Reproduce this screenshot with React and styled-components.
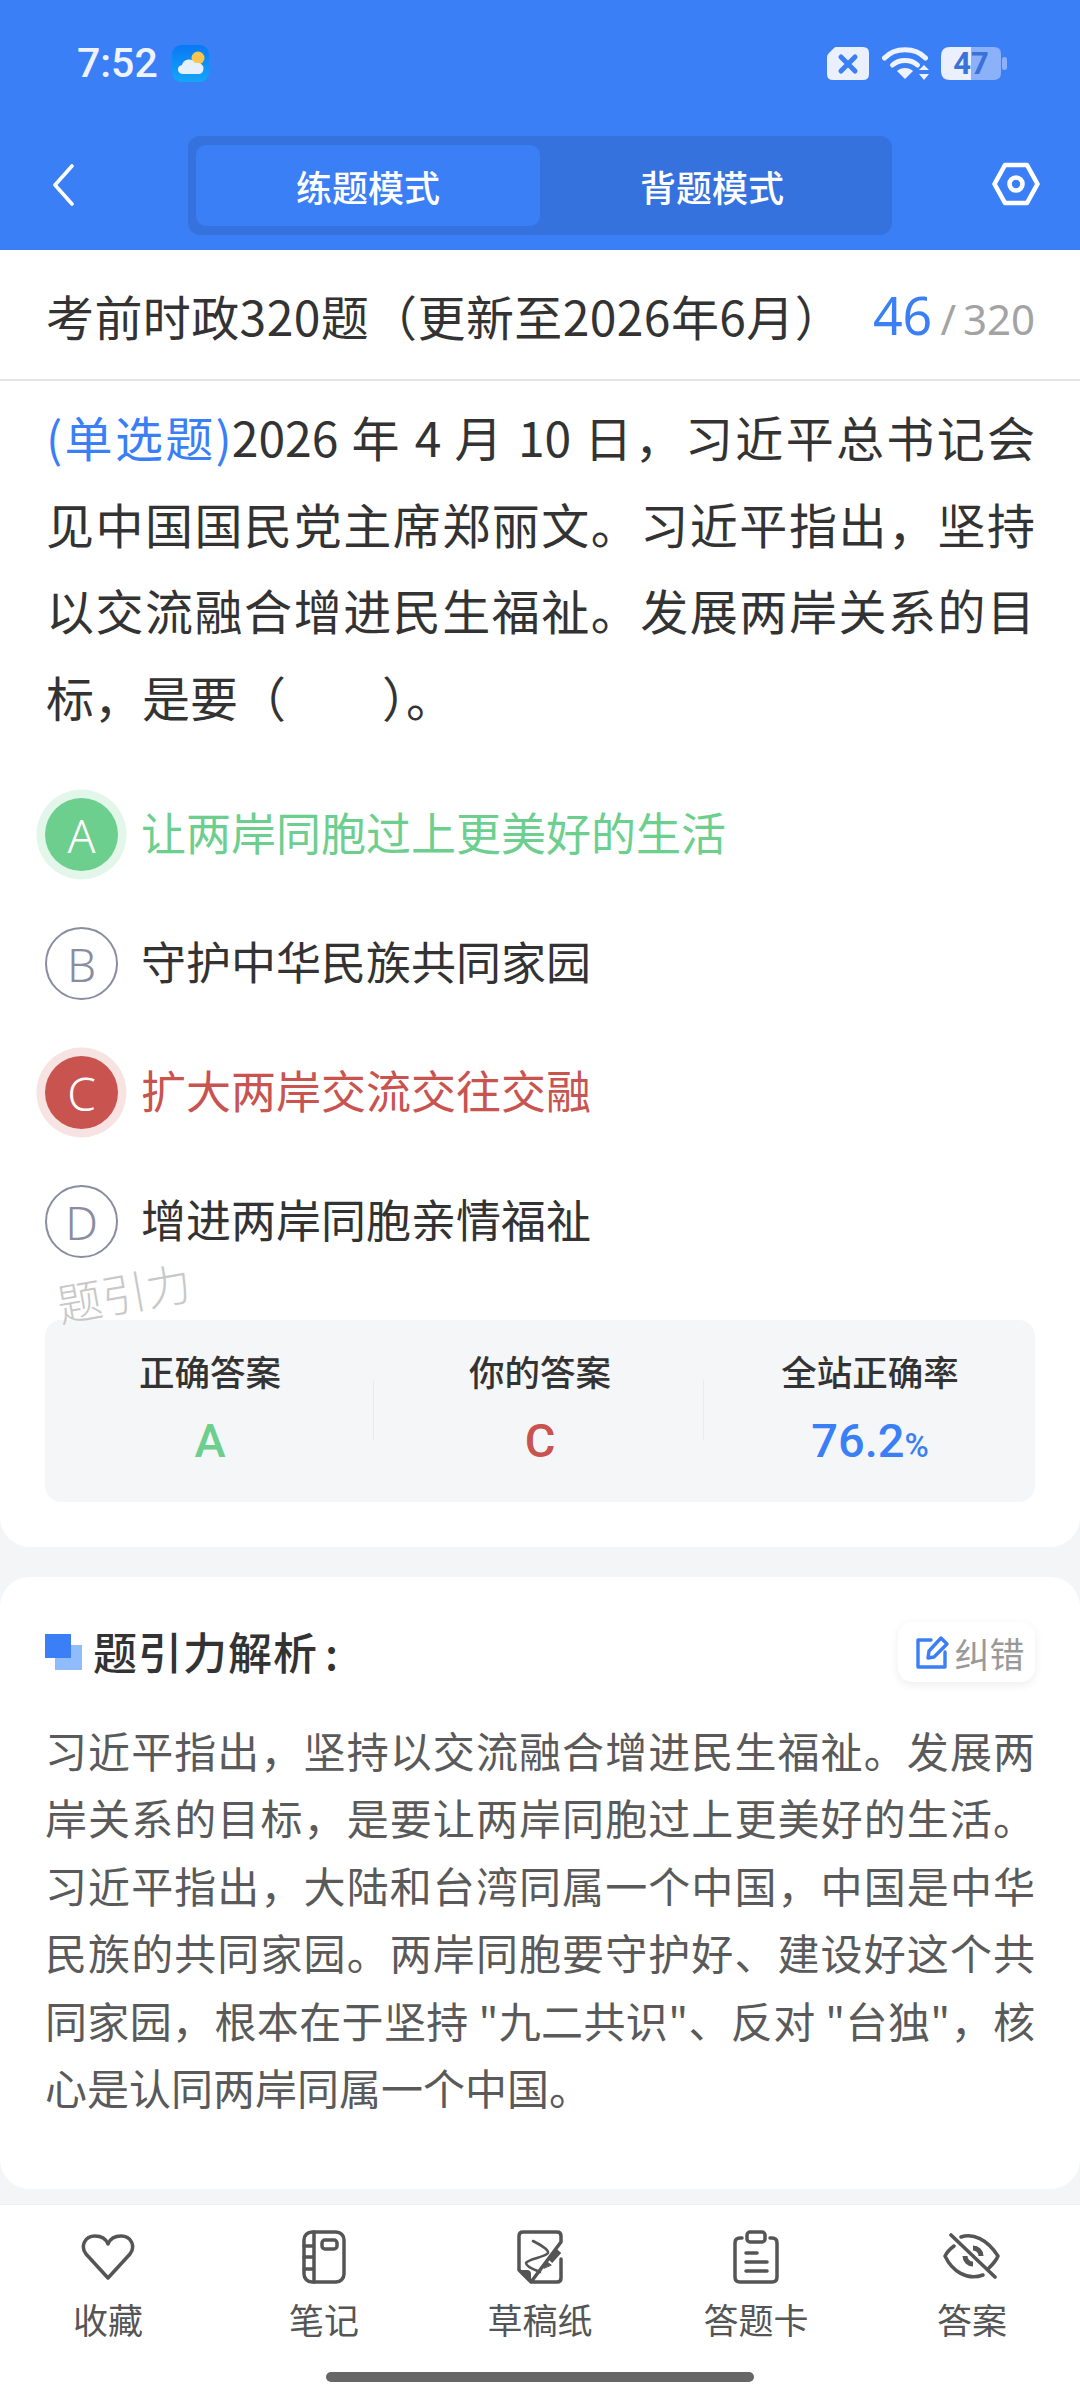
import React from "react";
import styled, { createGlobalStyle } from "styled-components";

const CJK = `"Noto Sans CJK SC", "Noto Sans", sans-serif`;
const LATIN = `Roboto, "Noto Sans CJK SC", sans-serif`;
const BLUE = "#3b7ff7";
const GREEN = "#6dcf8e";
const RED = "#c9534f";

const Global = createGlobalStyle`
  html, body { margin: 0; padding: 0; background: #f4f5f7; }
  * { box-sizing: border-box; }
`;

const Page = styled.div`
  width: 1080px; height: 2400px; display: flex; flex-direction: column;
  background: #f4f5f7; font-family: ${LATIN}; color: #333; overflow: hidden;
`;
const Header = styled.header`background: ${BLUE}; height: 250px; display: flex; flex-direction: column;`;
const StatusBar = styled.div`
  height: 126px; padding: 0 73px 0 77px; display: flex; align-items: center; justify-content: space-between;
`;
const StatusLeft = styled.div`display: flex; align-items: center; gap: 14px;`;
const Time = styled.span`font-size: 41px; font-weight: 500; color: #eef3fe; font-family: Roboto, sans-serif;`;
const StatusRight = styled.div`display: flex; align-items: center; gap: 12px;`;
const Battery = styled.div`
  position: relative; width: 66px; height: 33px; display: flex; align-items: center; justify-content: center;
`;
const BatteryText = styled.span`
  position: relative; font-size: 31px; font-weight: 700; color: #3a72d8; font-family: Roboto, sans-serif; margin-right: 6px;
`;
const BatteryShape = styled.svg`position: absolute; inset: 0;`;
const Nav = styled.nav`
  flex: 1; display: flex; align-items: flex-start; justify-content: space-between; padding: 10px 40px 0 52px;
`;
const NavIcon = styled.svg`display: block; margin-top: ${p => p.$top}px;`;
const Tabs = styled.div`
  width: 704px; height: 99px; padding: 9px 8px; display: flex; background: #3672dd; border-radius: 12px; margin-left: 14px;
`;
const Tab = styled.div`
  flex: 1; display: flex; align-items: center; justify-content: center; font-family: ${CJK}; font-size: 36px; font-weight: 500;
  color: #fff; border-radius: 10px; background: ${p => (p.$active ? BLUE : "transparent")};
`;
const Scroll = styled.main`flex: 1; min-height: 0; overflow: hidden;`;
const QuestionCard = styled.section`background: #fff; height: 1297px; border-radius: 0 0 30px 30px;`;
const TitleRow = styled.div`
  height: 131px; border-bottom: 2px solid #e3e3e3; padding: 0 45px 0 46px; display: flex; align-items: center; justify-content: space-between;
`;
const Title = styled.h1`margin: 0; font-family: ${CJK}; font-weight: 400; font-size: 48px; color: #333; white-space: nowrap; letter-spacing: 0.4px;`;
const Counter = styled.div`display: flex; align-items: baseline; white-space: nowrap;`;
const Current = styled.span`font-size: 52px; color: ${BLUE}; font-family: "Noto Sans", sans-serif;`;
const Total = styled.span`font-size: 42px; color: #a3a3a3; margin-left: 8px; word-spacing: -4px; font-family: "Noto Sans", sans-serif;`;
const Question = styled.p`
  margin: 12px 45px 0 46px; font-family: ${CJK}; font-size: 48px; line-height: 86.6px; letter-spacing: 0; color: #333; text-align: justify;
`;
const QType = styled.span`color: ${BLUE};`;
const Options = styled.div`margin-top: 31px; padding-left: 45px;`;
const Option = styled.div`
  height: 129px; display: flex; align-items: center; gap: 23px; font-family: ${CJK}; font-size: 45px;
  color: ${p => p.$color || "#333"};
`;
const OptionText = styled.span`margin-bottom: 6px;`;
const Badge = styled.span`
  width: 73px; height: 73px; flex: none; border-radius: 50%; display: flex; align-items: center; justify-content: center;
  font-family: "Noto Sans", sans-serif; font-size: 46px; font-weight: 300;
  color: ${p => (p.$bg ? "#fff" : "#8a8ca0")};
  background: ${p => p.$bg || "#fff"};
  border: ${p => (p.$bg ? "none" : "2px solid #8a8ca0")};
  box-shadow: ${p => (p.$ring ? `0 0 0 8.5px ${p.$ring}` : "none")};
`;
const Watermark = styled.div`
  position: absolute; left: 56px; top: 1259px; transform: rotate(-10deg); font-family: ${CJK}; font-size: 45px;
  font-weight: 300; color: #c8c8c8; pointer-events: none;
`;
const Stats = styled.div`
  margin: 34px 45px 0; height: 182px; background: #f4f6f8; border-radius: 16px; display: grid; grid-template-columns: repeat(3, 1fr); align-items: center;
`;
const Stat = styled.div`
  height: 100%; position: relative; display: flex; flex-direction: column; align-items: center; padding-top: 28px;
  & + &::before { content: ""; position: absolute; left: -2px; top: 60px; height: 60px; width: 1px; background: #e9ebee; }
`;
const StatLabel = styled.div`font-family: ${CJK}; font-size: 35.500px; font-weight: 500; color: #333; line-height: 46px;`;
const StatValue = styled.div`
  font-family: Roboto, sans-serif; font-size: 47px; font-weight: 500; line-height: 60px; margin-top: 17px; color: ${p => p.$color};
  small { font-size: 33px; }
`;
const AnalysisCard = styled.section`background: #fff; margin-top: 30px; height: 612px; border-radius: 30px; padding: 45px 45px 0;`;
const AnalysisHead = styled.div`display: flex; align-items: center; justify-content: space-between; height: 60px;`;
const HeadLeft = styled.div`display: flex; align-items: center; gap: 11px;`;
const HeadMark = styled.span`position: relative; width: 37px; height: 36px; display: block; background: linear-gradient(#90bcfb, #90bcfb) 10px 11px / 27px 25px no-repeat;
  &::after { content: ""; position: absolute; left: 0; top: 0; width: 26px; height: 24px; background: ${BLUE}; }
`;
const HeadTitle = styled.h2`margin: -3px 0 0; font-family: ${CJK}; font-size: 44px; font-weight: 500; letter-spacing: 1px; color: #333; white-space: nowrap;
  span { margin-left: 7px; }
`;
const ReportBtn = styled.div`
  width: 137px; height: 60px; padding-left: 8px; border-radius: 14px; background: #fff; box-shadow: 0 3px 10px rgba(0,0,0,.07);
  display: flex; align-items: center; justify-content: center; gap: 4px; font-family: ${CJK}; font-size: 35px; color: #999;
`;
const AnalysisText = styled.p`
  margin: 34px 0 0; font-family: ${CJK}; font-size: 42px; line-height: 67.4px; letter-spacing: 0; color: #5a5a5a; text-align: justify; font-weight: 400;
`;
const Footer = styled.footer`
  height: 196px; background: #fff; border-top: 1px solid #eeeff1; display: flex; flex-direction: column; flex: none;
`;
const FooterItems = styled.div`display: grid; grid-template-columns: repeat(5, 216px);`;
const FooterItem = styled.div`height: 150px; display: flex; flex-direction: column; align-items: center; padding-top: 22px; color: #555;`;
const FooterIconBox = styled.div`height: 60px; display: flex; align-items: center; justify-content: center;`;
const FooterLabel = styled.span`font-family: ${CJK}; font-size: 35px; line-height: 48px; margin-top: 8px; color: #555;`;
const HomeBar = styled.div`width: 428px; height: 10px; border-radius: 5px; background: #666; margin: 17px auto 0;`;

const Svg = ({ w, h, children }) => (
  <svg width={w} height={h} viewBox={`0 0 ${w} ${h}`} fill="none" stroke="currentColor" strokeWidth="3.5" strokeLinecap="round" strokeLinejoin="round">
    {children}
  </svg>
);

const options = [
  { k: "A", t: "让两岸同胞过上更美好的生活", c: GREEN, ring: "#e2f6ea" },
  { k: "B", t: "守护中华民族共同家园" },
  { k: "C", t: "扩大两岸交流交往交融", c: RED, ring: "#f6e3e2" },
  { k: "D", t: "增进两岸同胞亲情福祉" },
];

const footer = [
  {
    l: "收藏",
    i: (
      <Svg w={54} h={46}>
        <path d="M27 44 L5 20 C-1 12 4 2 14 2 C20 2 25 5 27 10 C29 5 34 2 40 2 C50 2 55 12 49 20 Z" />
      </Svg>
    ),
  },
  {
    l: "笔记",
    i: (
      <Svg w={44} h={54}>
        <rect x="2" y="2" width="40" height="50" rx="8" />
        <path d="M12 2 V52 M2 16 H12 M2 27 H12 M2 39 H12" />
        <rect x="20" y="10" width="15" height="9" rx="3" />
      </Svg>
    ),
  },
  {
    l: "草稿纸",
    i: (
      <Svg w={46} h={54}>
        <path d="M14 52 H40 Q44 52 44 48 V29 M44 12 V6 Q44 2 40 2 H6 Q2 2 2 6 V40 L14 52 Z" />
        <path d="M3 41 H10 Q13 41 13 44 V51 Z" fill="currentColor" strokeWidth="2" />
        <path d="M16 11 C22 14 32 20 31 23 C29 27 10 29 9 33 C9 37 18 40 23 42" strokeWidth="2.6" />
        <path d="M33 31 L42 21" strokeWidth="6" strokeLinecap="butt" />
        <path d="M27 38 L29 31 L34 35 Z" fill="currentColor" strokeWidth="1" />
      </Svg>
    ),
  },
  {
    l: "答题卡",
    i: (
      <Svg w={46} h={54}>
        <path d="M9 8 H7 Q2 8 2 13 V47 Q2 52 7 52 H39 Q44 52 44 47 V13 Q44 8 39 8 H37" />
        <rect x="14" y="2" width="18" height="10" rx="3" />
        <path d="M13 23 H24 M13 32 H34 M13 41 H34" strokeWidth="3.5" />
      </Svg>
    ),
  },
  {
    l: "答案",
    i: (
      <Svg w={58} h={48}>
        <path d="M8 2 L52 44" strokeWidth="3.6" />
        <path d="M18 4 C30 0 44 6 55 23 C53 28 49 32 46 35 M11 13 C7 16 4 19 2 23 C9 38 24 48 40 42" />
        <path d="M30 15 A8 8 0 0 1 38 23 M22 23 A8 8 0 0 0 30 31" strokeWidth="5" strokeLinecap="butt" />
      </Svg>
    ),
  },
];

export default function App() {
  return (
    <Page>
      <Global />
      <Header>
        <StatusBar>
          <StatusLeft>
            <Time>7:52</Time>
            <svg width="37" height="37" viewBox="0 0 37 37">
              <defs>
                <linearGradient id="wx" x1="0" y1="0" x2="0" y2="1">
                  <stop offset="0" stopColor="#0a78f5" />
                  <stop offset="1" stopColor="#14a6f8" />
                </linearGradient>
              </defs>
              <rect width="37" height="37" rx="9" fill="url(#wx)" />
              <circle cx="26" cy="13" r="6.5" fill="#f9c54c" />
              <path d="M11 29 C5 29 4 21 10 20 C11 14 20 12 23 18 C29 17 33 21 31 26 C30 28 29 29 27 29 Z" fill="#e4f1fc" />
            </svg>
          </StatusLeft>
          <StatusRight>
            <svg width="44" height="35" viewBox="0 0 44 35">
              <path d="M10 1 H37 Q43 1 43 7 V28 Q43 34 37 34 H7 Q1 34 1 28 V11 Q1 9 3 7 L8 2 Q9 1 10 1 Z" fill="#eaf0fe" />
              <path d="M15 11 L29 25 M29 11 L15 25" stroke={BLUE} strokeWidth="5" strokeLinecap="round" />
            </svg>
            <svg width="47" height="33" viewBox="0 0 47 33">
              <g fill="none" stroke="#eef3fe" strokeWidth="5" strokeLinecap="round">
                <path d="M2.5 11 C13 0 33 0 43.5 11" />
                <path d="M10.5 18 C17 12 29 12 35.5 18" />
              </g>
              <path d="M23 32 L15 24 C19 20 27 20 31 24 Z" fill="#eef3fe" />
              <path d="M42 18 L47 23 H37 Z M42 33 L47 27 H37 Z" fill="#eef3fe" />
            </svg>
            <Battery>
              <BatteryShape width="66" height="33" viewBox="0 0 66 33">
                <path d="M30 0 H53 Q60 0 60 7 V26 Q60 33 53 33 H30 Z" fill="#8ab1fa" />
                <rect x="61" y="10" width="5" height="13" rx="2.5" fill="#8ab1fa" />
                <path d="M30 0 H9 Q0 0 0 9 V24 Q0 33 9 33 H30 Z" fill="#eaf0fe" />
              </BatteryShape>
              <BatteryText>47</BatteryText>
            </Battery>
          </StatusRight>
        </StatusBar>
        <Nav>
          <NavIcon $top={28} width="22" height="42" viewBox="0 0 22 42" fill="none" stroke="#fff" strokeWidth="3.6" strokeLinecap="round" strokeLinejoin="round">
            <path d="M20 2 L3 21 L20 40" />
          </NavIcon>
          <Tabs>
            <Tab $active>练题模式</Tab>
            <Tab>背题模式</Tab>
          </Tabs>
          <NavIcon $top={26} width="48" height="44" viewBox="0 0 48 44" fill="none" stroke="#fff" strokeWidth="4.6" strokeLinejoin="round">
            <path d="M13 3 H35 L45.500 22 L35 41 H13 L2.500 22 Z" />
            <circle cx="24" cy="22" r="6.500" />
          </NavIcon>
        </Nav>
      </Header>
      <Scroll>
        <QuestionCard>
          <TitleRow>
            <Title>考前时政320题（更新至2026年6月）</Title>
            <Counter>
              <Current>46</Current>
              <Total>/ 320</Total>
            </Counter>
          </TitleRow>
          <Question>
            <QType>(单选题)</QType>2026 年 4 月 10 日，习近平总书记会见中国国民党主席郑丽文。习近平指出，坚持以交流融合增进民生福祉。发展两岸关系的目标，是要（　　）。
          </Question>
          <Options>
            {options.map(o => (
              <Option key={o.k} $color={o.c}>
                <Badge $bg={o.c} $ring={o.ring}>{o.k}</Badge>
                <OptionText>{o.t}</OptionText>
              </Option>
            ))}
          </Options>
          <Watermark>题引力</Watermark>
          <Stats>
            <Stat>
              <StatLabel>正确答案</StatLabel>
              <StatValue $color={GREEN}>A</StatValue>
            </Stat>
            <Stat>
              <StatLabel>你的答案</StatLabel>
              <StatValue $color={RED}>C</StatValue>
            </Stat>
            <Stat>
              <StatLabel>全站正确率</StatLabel>
              <StatValue $color={BLUE}>76.2<small>%</small></StatValue>
            </Stat>
          </Stats>
        </QuestionCard>
        <AnalysisCard>
          <AnalysisHead>
            <HeadLeft>
              <HeadMark />
              <HeadTitle>题引力解析<span>:</span></HeadTitle>
            </HeadLeft>
            <ReportBtn>
              <svg width="34" height="34" viewBox="0 0 34 34" fill="none" stroke={BLUE} strokeWidth="3.4" strokeLinejoin="round" strokeLinecap="round">
                <path d="M15 5 H2 V32 H29 V17" />
                <path d="M12 23 L13 16 L25 3 L31 9 L18 22 Z" />
              </svg>
              纠错
            </ReportBtn>
          </AnalysisHead>
          <AnalysisText>
            习近平指出，坚持以交流融合增进民生福祉。发展两岸关系的目标，是要让两岸同胞过上更美好的生活。习近平指出，大陆和台湾同属一个中国，中国是中华民族的共同家园。两岸同胞要守护好、建设好这个共同家园，根本在于坚持 "九二共识"、反对 "台独"，核心是认同两岸同属一个中国。
          </AnalysisText>
        </AnalysisCard>
      </Scroll>
      <Footer>
        <FooterItems>
          {footer.map(f => (
            <FooterItem key={f.l}>
              <FooterIconBox>{f.i}</FooterIconBox>
              <FooterLabel>{f.l}</FooterLabel>
            </FooterItem>
          ))}
        </FooterItems>
        <HomeBar />
      </Footer>
    </Page>
  );
}
